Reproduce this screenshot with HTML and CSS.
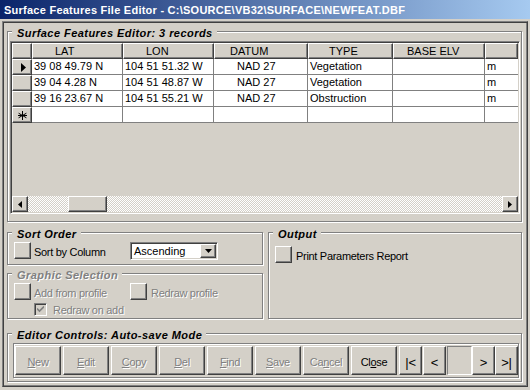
FILE: index.html
```html
<!DOCTYPE html>
<html lang="en">
<head>
    <meta charset="UTF-8">
    <title>Surface Features File Editor</title>
    <link rel="stylesheet" href="styles.css">
</head>
<body>
<div id="window">
    <div id="titlebar">Surface Features File Editor - C:\SOURCE\VB32\SURFACE\NEWFEAT.DBF</div>
    <div id="client">

        <div class="frame" id="grid-frame">
            <span class="caption">Surface Features Editor: 3 records</span>
            <div id="grid">
                <div class="grid-row">
                    <div class="hcell"></div>
                    <div class="hcell h-lat">LAT</div>
                    <div class="hcell h-lon">LON</div>
                    <div class="hcell h-datum">DATUM</div>
                    <div class="hcell h-type">TYPE</div>
                    <div class="hcell h-elv">BASE ELV</div>
                    <div class="hcell"></div>
                </div>
                <div class="grid-row">
                    <div class="rcell"><svg width="6" height="9" class="current"><polygon points="0,0 5,4.5 0,9" fill="#000"/></svg></div>
                    <div class="cell">39 08 49.79 N</div>
                    <div class="cell">104 51 51.32 W</div>
                    <div class="cell datum">NAD 27</div>
                    <div class="cell">Vegetation</div>
                    <div class="cell"></div>
                    <div class="cell last">m</div>
                </div>
                <div class="grid-row">
                    <div class="rcell"></div>
                    <div class="cell">39 04 4.28 N</div>
                    <div class="cell">104 51 48.87 W</div>
                    <div class="cell datum">NAD 27</div>
                    <div class="cell">Vegetation</div>
                    <div class="cell"></div>
                    <div class="cell last">m</div>
                </div>
                <div class="grid-row">
                    <div class="rcell"></div>
                    <div class="cell">39 16 23.67 N</div>
                    <div class="cell">104 51 55.21 W</div>
                    <div class="cell datum">NAD 27</div>
                    <div class="cell">Obstruction</div>
                    <div class="cell"></div>
                    <div class="cell last">m</div>
                </div>
                <div class="grid-row">
                    <div class="rcell"><svg width="9" height="9"><path d="M4.5 0V9M0.6 2.2L8.4 6.8M0.6 6.8L8.4 2.2M0 4.5H9" stroke="#000" stroke-width="1"/></svg></div>
                    <div class="cell"></div>
                    <div class="cell"></div>
                    <div class="cell"></div>
                    <div class="cell"></div>
                    <div class="cell"></div>
                    <div class="cell last"></div>
                </div>
                <div class="grid-empty"></div>
                <div class="hscroll">
                    <div class="raised sb-btn"><svg width="4" height="7"><polygon points="4,0 0,3.5 4,7" fill="#000"/></svg></div>
                    <div class="sb-track"><div class="raised sb-thumb"></div></div>
                    <div class="raised sb-btn"><svg width="4" height="7"><polygon points="0,0 4,3.5 0,7" fill="#000"/></svg></div>
                </div>
            </div>
        </div>

        <div id="mid">
            <div id="mid-left">
                <div class="frame" id="sort-frame">
                    <span class="caption">Sort Order</span>
                    <div class="opt">
                        <div class="raised chkbtn"></div>
                        <span class="label">Sort by Column</span>
                    </div>
                    <div class="combo">
                        <div class="combo-text">Ascending</div>
                        <div class="raised combo-btn"><svg width="7" height="4"><polygon points="0,0 7,0 3.5,4" fill="#000"/></svg></div>
                    </div>
                </div>
                <div class="frame disabled" id="graphic-frame">
                    <span class="caption">Graphic Selection</span>
                    <div class="opt-row">
                        <div class="opt">
                            <div class="raised chkbtn"></div>
                            <span class="label">Add from profile</span>
                        </div>
                        <div class="opt">
                            <div class="raised chkbtn"></div>
                            <span class="label gap4">Redraw profile</span>
                        </div>
                    </div>
                    <div class="check-row">
                        <div class="check"><svg width="7" height="7"><path d="M0 2.5L2.5 5L7 0.5" stroke="#808080" stroke-width="1.6" fill="none"/></svg></div>
                        <span class="label">Redraw on add</span>
                    </div>
                </div>
            </div>
            <div class="frame" id="output-frame">
                <span class="caption">Output</span>
                <div class="opt">
                    <div class="raised chkbtn"></div>
                    <span class="label gap4">Print Parameters Report</span>
                </div>
            </div>
        </div>

        <div class="frame" id="controls-frame">
            <span class="caption">Editor Controls: Auto-save Mode</span>
            <div class="btnbox">
                <div class="raised btn off"><u>N</u>ew</div>
                <div class="raised btn off"><u>E</u>dit</div>
                <div class="raised btn off"><u>C</u>opy</div>
                <div class="raised btn off"><u>D</u>el</div>
                <div class="raised btn off"><u>F</u>ind</div>
                <div class="raised btn off"><u>S</u>ave</div>
                <div class="raised btn off">Ca<u>n</u>cel</div>
                <div class="raised btn">Cl<u>o</u>se</div>
                <div class="raised nav">|&lt;</div>
                <div class="raised nav">&lt;</div>
                <div class="navbox"></div>
                <div class="raised nav">&gt;</div>
                <div class="raised nav">&gt;|</div>
            </div>
        </div>

    </div>
</div>
</body>
</html>
```

FILE: styles.css
```css
body{
    margin: 0;
    background-color: #d4d0c8;
    font-family: "Liberation Sans", Arial, sans-serif;
    font-size: 11px;
    color: #000;
}
#window{
    width: 530px;
    height: 390px;
    box-sizing: border-box;
    display: flex;
    flex-direction: column;
    background-color: #d4d0c8;
    overflow: hidden;
}
#titlebar{
    height: 19px;
    flex: none;
    box-sizing: border-box;
    padding: 1px 0 0 4px;
    line-height: 18px;
    background: linear-gradient(to right, #0a246a, #a6caf0);
    color: #fff;
    font-weight: bold;
    letter-spacing: 0.25px;
    white-space: nowrap;
}
#client{
    flex: 1;
    margin: 2px 2px 3px 2px;
    padding: 9px 0 0 4px;
    border-top: 1px solid #808080;
    border-left: 1px solid #808080;
    border-right: 1px solid #404040;
    border-bottom: 1px solid #404040;
    box-shadow: inset 1px 1px 0 #404040, inset -1px -1px 0 #808080;
}

/* etched frames */
.frame{
    position: relative;
    box-sizing: border-box;
    border: 1px solid #808080;
    box-shadow: 1px 1px 0 #fff, inset 1px 1px 0 #fff;
}
.caption{
    position: absolute;
    top: -5px;
    left: 4px;
    padding: 0 4px 0 5px;
    background-color: #d4d0c8;
    font-weight: bold;
    font-style: italic;
    line-height: 13px;
    letter-spacing: 0.45px;
    white-space: nowrap;
}
.disabled .caption,
.disabled .label{
    color: #808080;
    text-shadow: 1px 1px 0 #fff;
}

/* 3d bits */
.raised{
    box-sizing: border-box;
    background-color: #d4d0c8;
    border: 1px solid;
    border-color: #fff #404040 #404040 #fff;
    box-shadow: inset -1px -1px 0 #808080;
}

/* grid */
#grid-frame{
    width: 515px;
    height: 191px;
    padding: 9px 0 0 2px;
}
#grid{
    width: 510px;
    height: 173px;
    box-sizing: border-box;
    padding: 1px;
    border: 1px solid;
    border-color: #808080 #fff #fff #808080;
    box-shadow: inset 1px 1px 0 #404040;
    background-color: #d4d0c8;
    display: flex;
    flex-direction: column;
    overflow: hidden;
}
.grid-row{
    display: grid;
    grid-template-columns: 20px 91px 91px 94px 85px 92px 33px;
    height: 16px;
    flex: none;
}
.hcell,
.rcell{
    box-sizing: border-box;
    background-color: #d4d0c8;
    border: 1px solid;
    border-color: #fff #404040 #404040 #fff;
    box-shadow: inset -1px -1px 0 #808080;
    line-height: 14px;
    white-space: nowrap;
    overflow: hidden;
}
.rcell{
    display: flex;
    align-items: center;
    justify-content: center;
}
.rcell .current{
    margin-left: 3px;
}
.h-lat, .h-lon{ padding-left: 22px; }
.h-datum{ padding-left: 15px; }
.h-type{ padding-left: 20px; }
.h-elv{ padding-left: 13px; }
.cell{
    box-sizing: border-box;
    background-color: #fff;
    border-right: 1px solid #808080;
    border-bottom: 1px solid #808080;
    padding-left: 2px;
    line-height: 15px;
    white-space: nowrap;
    overflow: hidden;
}
.cell.datum{
    padding-left: 23px;
}
.cell.last{
    border-right: none;
}
.grid-empty{
    flex: 1;
}
.hscroll{
    display: flex;
    height: 16px;
    flex: none;
}
.sb-btn{
    width: 16px;
    height: 16px;
    display: flex;
    align-items: center;
    justify-content: center;
}
.sb-track{
    flex: 1;
    background-color: #fff;
    background-image: conic-gradient(#d4d0c8 25%, #fff 0 50%, #d4d0c8 0 75%, #fff 0);
    background-size: 2px 2px;
}
.sb-thumb{
    width: 39px;
    height: 16px;
    margin-left: 40px;
}

/* middle frames */
#mid{
    display: flex;
    gap: 5px;
    margin-top: 10px;
}
#mid-left{
    width: 256px;
    display: flex;
    flex-direction: column;
    gap: 8px;
}
#sort-frame{
    height: 33px;
    padding: 9px 0 0 6px;
    display: flex;
    align-items: flex-start;
}
#graphic-frame{
    height: 46px;
    padding: 9px 0 0 6px;
}
#output-frame{
    width: 254px;
    height: 87px;
    padding: 13px 0 0 6px;
}
.opt{
    display: flex;
    align-items: flex-start;
    width: 116px;
    height: 17px;
    flex: none;
}
#output-frame .opt{
    width: auto;
}
.opt-row{
    display: flex;
}
.chkbtn{
    width: 17px;
    height: 17px;
    flex: none;
}
.label{
    margin-left: 3px;
    padding-top: 2px;
    letter-spacing: -0.3px;
    white-space: nowrap;
    line-height: 17px;
}
.label.gap4{
    margin-left: 4px;
}
.check-row{
    display: flex;
    align-items: flex-start;
    margin: 3px 0 0 20px;
}
.check-row .label{
    margin-left: 6px;
    padding-top: 1px;
    line-height: 13px;
}
.check{
    width: 13px;
    height: 13px;
    box-sizing: border-box;
    padding: 1px;
    border: 1px solid;
    border-color: #808080 #fff #fff #808080;
    box-shadow: inset 1px 1px 0 #404040;
    background-color: #d4d0c8;
    display: flex;
    align-items: center;
    justify-content: center;
}
.combo{
    width: 88px;
    height: 18px;
    box-sizing: border-box;
    padding: 1px;
    border: 1px solid;
    border-color: #808080 #fff #fff #808080;
    box-shadow: inset 1px 1px 0 #404040;
    background-color: #d4d0c8;
    display: flex;
}
.combo-text{
    flex: 1;
    background-color: #fff;
    padding-left: 2px;
    line-height: 14px;
}
.combo-btn{
    width: 16px;
    display: flex;
    align-items: center;
    justify-content: center;
}

/* editor controls */
#controls-frame{
    width: 515px;
    height: 49px;
    margin-top: 14px;
    padding: 9px 0 0 5px;
}
.btnbox{
    width: 506px;
    height: 35px;
    box-sizing: border-box;
    padding: 2px 0 0 1px;
    border: 1px solid #808080;
    box-shadow: 1px 1px 0 #fff, inset 1px 1px 0 #fff;
    display: flex;
}
.btn,
.nav{
    height: 29px;
    padding-top: 3px;
    display: flex;
    align-items: center;
    justify-content: center;
    letter-spacing: -0.3px;
    flex: none;
}
.btn{
    width: 46px;
    margin-right: 2px;
}
.btn.off{
    color: #808080;
    text-shadow: 1px 1px 0 #fff;
}
.nav{
    width: 23px;
    margin-right: 1px;
    font-size: 13px;
}
.nav:nth-last-child(2){
    margin-right: 0;
}
.navbox{
    width: 25px;
    height: 29px;
    box-sizing: border-box;
    border: 1px solid;
    border-color: #808080 #fff #fff #808080;
    flex: none;
}
```
